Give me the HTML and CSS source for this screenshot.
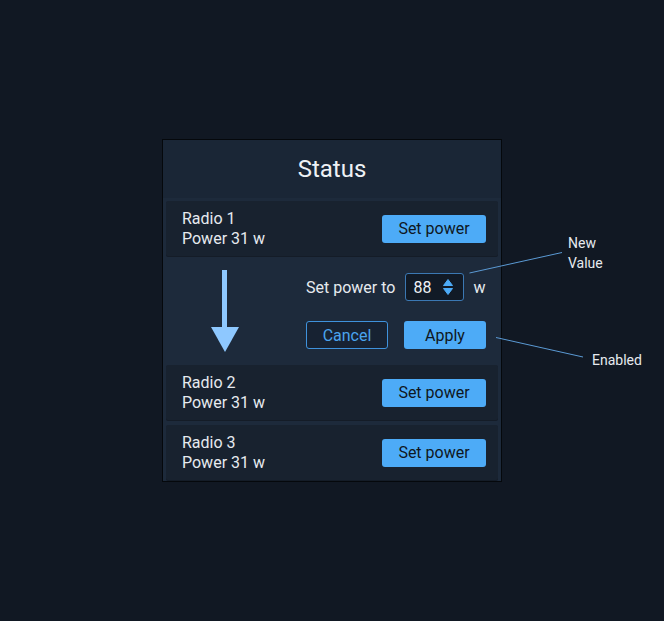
FILE: index.html
```html
<!DOCTYPE html>
<html>
<head>
<meta charset="utf-8">
<link rel="stylesheet" href="styles.css">
</head>
<body>
<div class="canvas">
  <div class="panel">
    <div class="header">Status</div>
    <div class="body">
      <div class="row">
        <div class="info"><div>Radio 1</div><div>Power 31 w</div></div>
        <button class="btn primary">Set power</button>
      </div>
      <div class="edit">
        <svg class="arrow" width="28" height="82" viewBox="0 0 28 82">
          <rect x="11" y="0" width="5" height="58" fill="#8ec8ff"/>
          <polygon points="0,57 28,57 14,82" fill="#8ec8ff"/>
        </svg>
        <div class="form">
          <div class="line">
            <span class="lbl">Set power to</span>
            <div class="input">
              <span>88</span>
              <svg class="spin" width="10" height="16" viewBox="0 0 10 16">
                <path d="M5 0.5 L9.5 6.5 L0.5 6.5 Z" fill="#4dabf7" stroke="#4dabf7" stroke-linejoin="round"/>
                <path d="M0.5 9.5 L9.5 9.5 L5 15.5 Z" fill="#4dabf7" stroke="#4dabf7" stroke-linejoin="round"/>
              </svg>
            </div>
            <span class="unit">w</span>
          </div>
          <div class="actions">
            <button class="btn outline">Cancel</button>
            <button class="btn primary small">Apply</button>
          </div>
        </div>
      </div>
      <div class="row">
        <div class="info"><div>Radio 2</div><div>Power 31 w</div></div>
        <button class="btn primary">Set power</button>
      </div>
      <div class="row">
        <div class="info"><div>Radio 3</div><div>Power 31 w</div></div>
        <button class="btn primary">Set power</button>
      </div>
    </div>
  </div>
  <svg class="callouts" width="664" height="621" viewBox="0 0 664 621">
    <line x1="469.5" y1="273" x2="562" y2="252.5" stroke="#5b9ad4" stroke-width="1"/>
    <line x1="496" y1="337.5" x2="583" y2="357" stroke="#5b9ad4" stroke-width="1"/>
  </svg>
  <div class="note note-new">New<br>Value</div>
  <div class="note note-enabled">Enabled</div>
</div>
</body>
</html>
```

FILE: styles.css
```css
* { box-sizing: border-box; }
html, body { margin: 0; padding: 0; }
body {
  background: #111823;
  font-family: Roboto, "Liberation Sans", sans-serif;
  color: #e6eaef;
}
.canvas {
  position: relative;
  width: 664px;
  height: 621px;
  padding: 139px 0 0 162px;
}
.panel {
  width: 340px;
  border: 1px solid #05080c;
  background: #1d2a3b;
}
.header {
  background: #1a2636;
  height: 58px;
  padding-top: 15px;
  font-size: 24px;
  line-height: 28px;
  text-align: center;
  color: #eef1f5;
}
.body {
  padding: 3px 3px 1px;
}
.row {
  height: 55px;
  background: #18222f;
  border-radius: 2px;
  display: flex;
  align-items: center;
  justify-content: space-between;
  padding: 0 12px 0 16px;
  box-shadow: 0 1px 0 #141c27;
}
.row + .row { margin-top: 5px; }
.info {
  font-size: 16px;
  line-height: 20px;
  color: #e6eaef;
}
.btn {
  font-family: Roboto, "Liberation Sans", sans-serif;
  font-size: 16px;
  height: 28px;
  border-radius: 3px;
  border: 1px solid transparent;
  padding: 0;
  cursor: pointer;
}
.btn.primary {
  width: 104px;
  background: #4dabf7;
  color: #0f1722;
}
.btn.primary.small { width: 82px; }
.btn.outline {
  width: 82px;
  background: #172232;
  border-color: #3f92dc;
  color: #4aa4ee;
}
.edit {
  height: 109px;
  display: flex;
  align-items: flex-start;
}
.arrow {
  display: block;
  margin: 14px 0 0 45px;
}
.form {
  margin-left: auto;
  padding: 17px 12px 0 0;
  width: 192px;
}
.line {
  display: flex;
  align-items: center;
  height: 28px;
  font-size: 16px;
}
.lbl { margin-right: 10px; }
.input {
  width: 59px;
  height: 28px;
  background: #111a26;
  border: 1px solid #3b78b3;
  border-radius: 3px;
  display: flex;
  align-items: center;
  padding-left: 7px;
  font-size: 16px;
  color: #eef1f5;
}
.spin { margin-left: 12px; display: block; }
.unit { margin-left: 9px; }
.actions {
  display: flex;
  justify-content: space-between;
  margin-top: 20px;
}
.callouts {
  position: absolute;
  left: 0;
  top: 0;
  pointer-events: none;
}
.note {
  position: absolute;
  font-size: 14px;
  line-height: 20px;
  color: #e6eaef;
}
.note-new { left: 568px; top: 233px; }
.note-enabled { left: 592px; top: 350px; }
```
